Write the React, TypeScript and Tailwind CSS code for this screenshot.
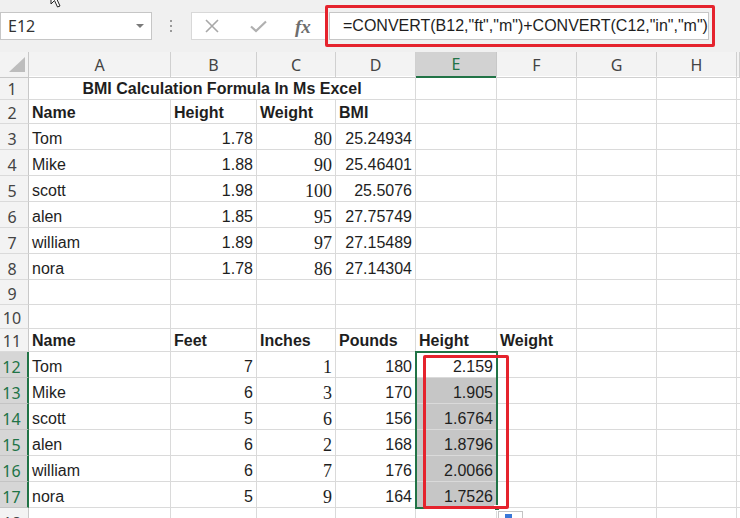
import React from "react";

type Cell = { v?: string; r?: boolean; b?: boolean; s?: boolean; sel?: boolean };
type Row = { n: number; h: string; cells: Cell[]; title?: boolean };

const gridCols = "grid grid-cols-[29px_142px_86px_79px_80px_81px_80px_80px_80px_3px]";

const top = [
  ["Tom", "1.78", "80", "25.24934"],
  ["Mike", "1.88", "90", "25.46401"],
  ["scott", "1.98", "100", "25.5076"],
  ["alen", "1.85", "95", "27.75749"],
  ["william", "1.89", "97", "27.15489"],
  ["nora", "1.78", "86", "27.14304"],
];

const bottom = [
  ["Tom", "7", "1", "180", "2.159"],
  ["Mike", "6", "3", "170", "1.905"],
  ["scott", "5", "6", "156", "1.6764"],
  ["alen", "6", "2", "168", "1.8796"],
  ["william", "6", "7", "176", "2.0066"],
  ["nora", "5", "9", "164", "1.7526"],
];

const empty = (k: number): Cell[] => Array.from({ length: k }, () => ({}));

const rows: Row[] = [
  { n: 1, h: "h-[24px]", title: true, cells: empty(5) },
  {
    n: 2,
    h: "h-[24px]",
    cells: [{ v: "Name", b: true }, { v: "Height", b: true }, { v: "Weight", b: true }, { v: "BMI", b: true }, ...empty(5)],
  },
  ...top.map((t, i) => ({
    n: 3 + i,
    h: "h-[26px]",
    cells: [{ v: t[0] }, { v: t[1], r: true }, { v: t[2], r: true, s: true }, { v: t[3], r: true }, ...empty(5)],
  })),
  { n: 9, h: "h-[25px]", cells: empty(9) },
  { n: 10, h: "h-[24px]", cells: empty(9) },
  {
    n: 11,
    h: "h-[23px]",
    cells: [
      { v: "Name", b: true },
      { v: "Feet", b: true },
      { v: "Inches", b: true },
      { v: "Pounds", b: true },
      { v: "Height", b: true },
      { v: "Weight", b: true },
      ...empty(3),
    ],
  },
  ...bottom.map((t, i) => ({
    n: 12 + i,
    h: "h-[26px]",
    cells: [
      { v: t[0] },
      { v: t[1], r: true },
      { v: t[2], r: true, s: true },
      { v: t[3], r: true },
      { v: t[4], r: true, sel: i > 0 },
      ...empty(4),
    ],
  })),
  { n: 18, h: "h-[26px]", cells: empty(9) },
];

function DataCell({ c }: { c: Cell }) {
  return (
    <div
      className={`flex items-end overflow-visible whitespace-nowrap border-r border-b border-[#dadada] pb-[1px] leading-[18px] ${
        c.r ? "justify-end pr-[3px]" : "pl-[3px]"
      } ${c.b ? "font-bold" : ""} ${
        c.s ? "font-['Liberation_Serif',serif] text-[18px]" : "text-[16px]"
      } ${c.sel ? "bg-[#c6c6c6]" : ""}`}
    >
      {c.v}
    </div>
  );
}

function RowHeader({ n }: { n: number }) {
  const sel = n >= 12 && n <= 17;
  return (
    <div
      className={`flex items-end justify-center pr-[4px] pb-[1px] leading-[18px] font-['Noto_Sans',sans-serif] text-[16px] ${
        sel
          ? "border-r-2 border-r-[#217346] border-b border-b-[#c4c4c4] bg-[#d6d6d6] text-[#217346]"
          : "border-r border-r-[#c8c8c8] border-b border-b-[#dadada] bg-[#f3f3f3] text-[#444]"
      }`}
    >
      {n}
    </div>
  );
}

export default function App() {
  return (
    <div className="relative h-[518px] w-[740px] overflow-hidden bg-white font-['Liberation_Sans',Arial,sans-serif] text-[#1e1e1e]">
      {/* formula bar */}
      <div className="flex h-[52px] items-center bg-[#f0f0f0]">
        <div className="flex h-[28px] w-[152px] items-center justify-between border border-[#c6c6c6] bg-white px-[7px]">
          <span className="font-['Noto_Sans',sans-serif] text-[16px] text-[#333]">E12</span>
          <span className="h-0 w-0 border-x-[4px] border-t-[4px] border-x-transparent border-t-[#7a7a7a]" />
        </div>
        <div className="ml-[18px] flex flex-col gap-[3px]">
          <span className="h-[2px] w-[2px] bg-[#9a9a9a]" />
          <span className="h-[2px] w-[2px] bg-[#9a9a9a]" />
          <span className="h-[2px] w-[2px] bg-[#9a9a9a]" />
        </div>
        <div className="ml-[19px] flex h-[28px] w-[135px] items-center border border-[#d8d8d8] bg-white">
          <svg width="14" height="14" viewBox="0 0 14 14" className="ml-[13px]">
            <path d="M1 1 L13 13 M13 1 L1 13" stroke="#a8a8a8" strokeWidth="1.6" fill="none" />
          </svg>
          <svg width="17" height="13" viewBox="0 0 17 13" className="ml-[31px]">
            <path d="M1 6.5 L6 11 L16 1.5" stroke="#b0b0b0" strokeWidth="2.2" fill="none" />
          </svg>
          <span className="ml-[28px] font-['Liberation_Serif',serif] text-[19px] italic font-bold leading-none text-[#6e6e6e]">
            fx
          </span>
        </div>
        <div className="ml-[3px] flex h-[28px] w-[380px] items-center border border-[#c6c6c6] bg-white pl-[13px]">
          <span className="whitespace-nowrap text-[16px] text-[#1e1e1e]">
            =CONVERT(B12,"ft","m")+CONVERT(C12,"in","m")
          </span>
        </div>
      </div>

      {/* column headers */}
      <div className={`${gridCols} h-[24px] bg-[#f3f3f3] font-['Noto_Sans',sans-serif] text-[16px] text-[#444]`}>
        <div className="relative border-r border-b border-[#c8c8c8]">
          <svg width="17" height="16" viewBox="0 0 17 16" className="absolute left-[9px] top-[5px]">
            <polygon points="16,0 16,15 0,15" fill="#bdbdbd" />
          </svg>
        </div>
        {["A", "B", "C", "D", "E", "F", "G", "H", ""].map((l, i) =>
          l === "E" ? (
            <div
              key={i}
              className="flex items-center justify-center border-r border-r-[#c8c8c8] border-b-2 border-b-[#217346] bg-[#d2d2d2] text-[#217346]"
            >
              {l}
            </div>
          ) : (
            <div key={i} className="flex items-center justify-center border-r border-b border-[#d0d0d0]">
              {l}
            </div>
          )
        )}
      </div>

      {/* rows */}
      {rows.map((row) => (
        <div key={row.n} className={`${gridCols} ${row.h}`}>
          <RowHeader n={row.n} />
          {row.title ? (
            <>
              <div className="col-span-4 flex items-end justify-center whitespace-nowrap border-r border-b border-[#dadada] pb-[1px] text-[16px] font-bold leading-[18px]">
                BMI Calculation Formula In Ms Excel
              </div>
              {row.cells.map((c, i) => (
                <DataCell key={i} c={c} />
              ))}
            </>
          ) : (
            row.cells.map((c, i) => <DataCell key={i} c={c} />)
          )}
        </div>
      ))}

      {/* mouse cursor */}
      <svg width="14" height="20" viewBox="0 0 14 20" className="absolute left-[50px] top-[-12px]">
        <path d="M1 1 L1 16 L4.5 12.5 L7.5 19 L10 18 L7 11.5 L12 11.5 Z" fill="#fff" stroke="#222" strokeWidth="1" />
      </svg>

      {/* selection border */}
      <div className="absolute left-[415px] top-[351px] h-[158px] w-[83px] border-2 border-[#217346]" />
      {/* fill handle */}
      <div className="absolute left-[494px] top-[505px] h-[6px] w-[6px] border border-white bg-[#217346]" />
      {/* quick analysis */}
      <div className="absolute left-[498px] top-[511px] h-[12px] w-[25px] border border-[#c4c4c4] bg-white">
        <div className="ml-[6px] mt-[2px] h-[8px] w-[7px] bg-[#3b78d8]" />
      </div>

      {/* red highlight boxes */}
      <div className="absolute left-[325px] top-[5px] h-[42px] w-[390px] rounded-[2px] border-[3px] border-[#e5232d]" />
      <div className="absolute left-[423px] top-[355px] h-[154px] w-[86px] rounded-[2px] border-[3px] border-[#e5232d]" />
    </div>
  );
}
